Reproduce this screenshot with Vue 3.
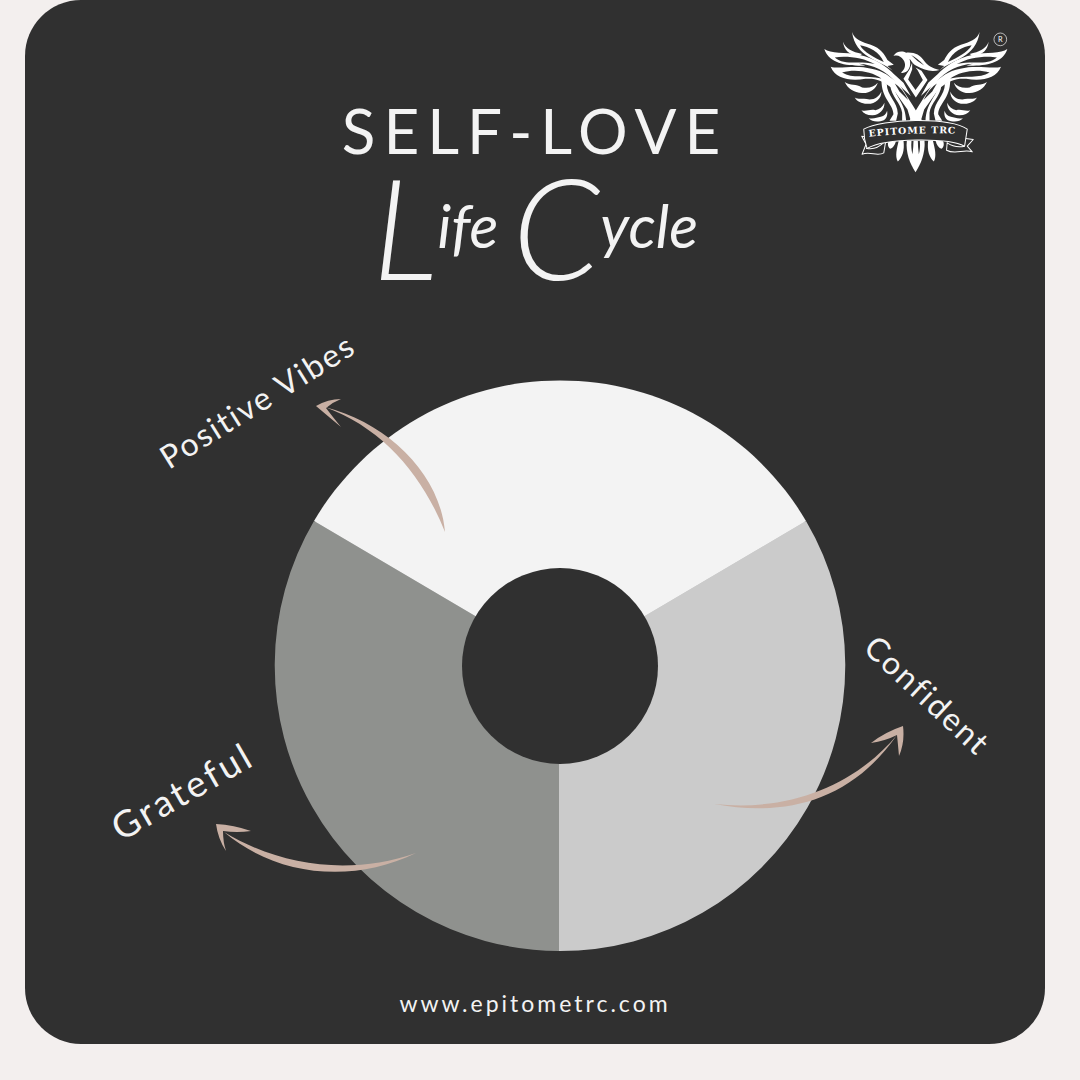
<script setup>
const slices = [
  { name: 'Positive Vibes', color: '#f3f3f3', d: 'M560 666 L314 521 A285.5 285.5 0 0 1 806 521 Z' },
  { name: 'Confident', color: '#cbcbcb', d: 'M559 666 L560 666 L806 521 A285.5 285.5 0 0 1 559 951 Z' },
  { name: 'Grateful', color: '#8f918e', d: 'M560 666 L559 666 L559 951 A285.5 285.5 0 0 1 314 521 Z' },
]

const labels = [
  { text: 'Positive Vibes', x: 169, y: 470, angle: -32, size: 'regular' },
  { text: 'Confident', x: 862, y: 650, angle: 43, size: 'regular' },
  { text: 'Grateful', x: 121, y: 842, angle: -30, size: 'large' },
]

const arrows = [
  'M325 407 C387 423 440 473 445 532 C422 474 382 428 325 407 Z M316 406 Q328 399 341 399 Q333 402 326 408 Q332 416 341 427 Q329 417 316 406 Z',
  'M714 804 C790 812 855 785 897 735 C850 802 785 817 714 804 Z M903 726 Q905 742 899 756 Q898 745 897 735 Q885 741 871 743 Q885 732 903 726 Z',
  'M224 832 C280 866 350 876 416 853 C350 885 275 875 224 832 Z M216 824 Q234 825 251 831 Q237 833 223 831 Q223 842 226 851 Q218 839 216 824 Z',
]
</script>

<template>
  <main class="poster">
    <header class="header">
      <h1 class="title">
        <span class="title-main">SELF-LOVE</span>
        <span class="title-script"><span class="initial">L</span>ife <span class="initial">C</span>ycle</span>
      </h1>
      <svg class="logo" viewBox="20 30 560 430" role="img" aria-label="Epitome TRC">
        <defs>
          <g id="wing">
            <path class="ink" d="M110 36 C118 60 140 66 166 74 C196 84 208 104 216 120 L235 134 L216 138 L232 152 C190 118 120 112 110 36 Z" />
            <path class="hole" d="M134 76 C160 80 192 96 205 126 C175 112 146 98 134 76 Z" />
            <path class="ink" d="M83 65 C92 88 110 94 140 102 L128 110 C100 102 86 90 83 65 Z" />
            <path class="ink" d="M27 87 C45 102 90 96 130 104 C180 114 215 140 235 162 L264 188 L286 228 L240 186 C210 152 175 134 130 131 L150 136 C90 140 40 128 27 87 Z" />
            <path class="hole" d="M58 112 C90 106 145 112 178 132 C130 120 88 138 58 112 Z" />
            <path class="ink" d="M46 140 C70 148 120 134 168 146 C205 152 225 172 250 190 L292 256 L320 302 L286 302 L276 268 L232 206 C200 180 180 174 150 176 C105 184 60 176 46 140 Z" />
            <path class="hole" d="M80 157 C120 146 168 154 198 175 C150 165 112 176 80 157 Z" />
            <path class="hole" d="M238 190 Q262 205 278 240 L252 214 Z" />
            <path class="ink" d="M88 186 C105 198 122 190 140 202 C160 206 176 200 187 188 C182 206 165 220 140 219 C115 217 97 206 88 186 Z" />
            <path class="ink" d="M118 232 C132 240 145 232 162 238 C180 238 191 228 198 214 C198 236 180 252 155 251 C138 250 125 244 118 232 Z" />
            <path class="ink" d="M138 270 C152 275 164 266 180 270 C192 268 202 260 207 248 C208 270 190 286 170 285 C155 285 145 280 138 270 Z" />
            <path class="ink" d="M160 294 C175 298 185 291 196 290 C206 288 212 282 215 272 C218 290 210 302 195 303 C180 305 168 303 160 294 Z" />
            <path class="ink" d="M198 180 L214 192 C214 226 246 246 247 280 L242 302 L222 302 L234 282 C232 250 198 236 198 180 Z" />
            <path class="ink" d="M224 194 L238 208 C242 232 270 250 272 302 L260 302 L260 278 C256 248 228 232 224 194 Z" />
            <path class="ink" d="M250 361 L264 361 C268 392 260 412 247 424 C238 408 244 385 250 361 Z" />
            <path class="ink" d="M220 362 L242 362 C238 376 232 384 224 386 C216 380 216 370 220 362 Z" />
          </g>
        </defs>
        <use href="#wing" />
        <use href="#wing" transform="translate(602 0) scale(-1 1)" />
        <path class="hole" d="M255 150 L288 112 L340 150 L346 172 L301 250 Z" />
        <path class="ink" d="M290 128 L290 148 L278 178 L300 210 L322 180 L306 150 L300 142 L318 152 L336 180 L301 232 L264 176 L282 148 Z" />
        <path class="ink" d="M234 108 C242 92 262 92 272 98 C298 96 314 106 324 120 C336 137 350 145 372 150 C346 157 326 150 304 138 C292 132 288 122 282 116 C290 140 276 162 256 158 C270 148 272 132 264 120 C256 108 246 104 234 108 Z" />
        <path class="hole" d="M287 105 Q305 114 326 136 Q304 124 287 105 Z" />
        <path class="ink" d="M274 361 L327 361 C330 398 316 432 300 456 C284 432 270 398 274 361 Z" />
        <path class="hole" d="M288 362 Q286 386 291 402 Q294 382 294 362 Z M313 362 Q315 386 310 402 Q307 382 307 362 Z" />
        <path class="ribbon" d="M147 350 L139 348 L152 372 L140 402 C165 392 185 410 205 398 L210 368 M152 384 Q180 392 206 366" />
        <path class="ribbon" d="M395 366 L393 390 C420 405 445 385 470 395 L455 378 L473 358 L450 355 M395 368 Q418 384 447 378" />
        <path class="ribbon" d="M145 327 C200 295 400 290 455 327 L447 378 C400 352 210 352 155 385 Q145 355 145 327 Z" />
        <path id="banner-line" fill="none" d="M161 350 Q295 334 460 342" />
        <text class="brand"><textPath href="#banner-line">EPITOME TRC</textPath></text>
        <circle class="ring" cx="554" cy="58" r="19" />
        <text class="mark" x="554" y="66">R</text>
      </svg>
    </header>

    <svg class="cycle" viewBox="25 320 1020 640" role="img" aria-label="Self-love life cycle">
      <circle class="base" cx="560" cy="666" r="284" />
      <path v-for="s in slices" :key="s.name" :d="s.d" :fill="s.color" />
      <circle class="hub" cx="560" cy="666" r="98" />
      <path v-for="a in arrows" :key="a" class="arrow" :d="a" />
      <text
        v-for="l in labels"
        :key="l.text"
        :class="['label', l.size]"
        :transform="`translate(${l.x} ${l.y}) rotate(${l.angle})`"
      >{{ l.text }}</text>
    </svg>

    <footer class="footer">
      <a class="site" href="https://www.epitometrc.com">www.epitometrc.com</a>
    </footer>
  </main>
</template>

<style>
body {
  background: #f3efee;
}
</style>

<style scoped>
.poster {
  margin: 0 35px 36px 25px;
  border-radius: 56px;
  background: #303030;
  color: #f3f3f3;
  font-family: Lato, "Open Sans", sans-serif;
}

.header {
  display: grid;
  grid-template-columns: 1fr auto 1fr;
  align-items: start;
  height: 320px;
}

.title {
  grid-column: 2;
  margin: 0;
  padding-top: 95px;
  font-weight: 400;
  text-align: center;
}

.title-main {
  display: block;
  font-size: 62px;
  line-height: 70px;
  letter-spacing: 8px;
}

.title-script {
  display: block;
  font-size: 60px;
  font-style: italic;
  line-height: 120px;
}

.initial {
  font-size: 140px;
  font-weight: 300;
  vertical-align: -32px;
}

.logo {
  grid-column: 3;
  justify-self: end;
  width: 187px;
  margin: 30px 36px 0 0;
}

.ink {
  fill: #fff;
}

.hole {
  fill: #303030;
}

.ribbon {
  fill: #303030;
  stroke: #fff;
  stroke-width: 3;
  stroke-linejoin: round;
}

.brand {
  fill: #fff;
  font: 700 28px "DejaVu Serif", serif;
  letter-spacing: 3px;
}

.ring {
  fill: none;
  stroke: #fff;
  stroke-width: 2;
}

.mark {
  fill: #fff;
  font-size: 22px;
  text-anchor: middle;
}

.cycle {
  display: block;
  width: 100%;
  overflow: visible;
}

.base {
  fill: #cbcbcb;
}

.hub {
  fill: #303030;
}

.arrow {
  fill: #c9b0a4;
}

.label {
  fill: #f3f3f3;
}

.regular {
  font-size: 32px;
  letter-spacing: 2px;
}

.large {
  font-size: 37px;
  letter-spacing: 3px;
}

.footer {
  padding: 27px 0 25px;
  text-align: center;
}

.site {
  display: block;
  color: inherit;
  font-size: 23px;
  line-height: 32px;
  letter-spacing: 3px;
  text-decoration: none;
}
</style>
